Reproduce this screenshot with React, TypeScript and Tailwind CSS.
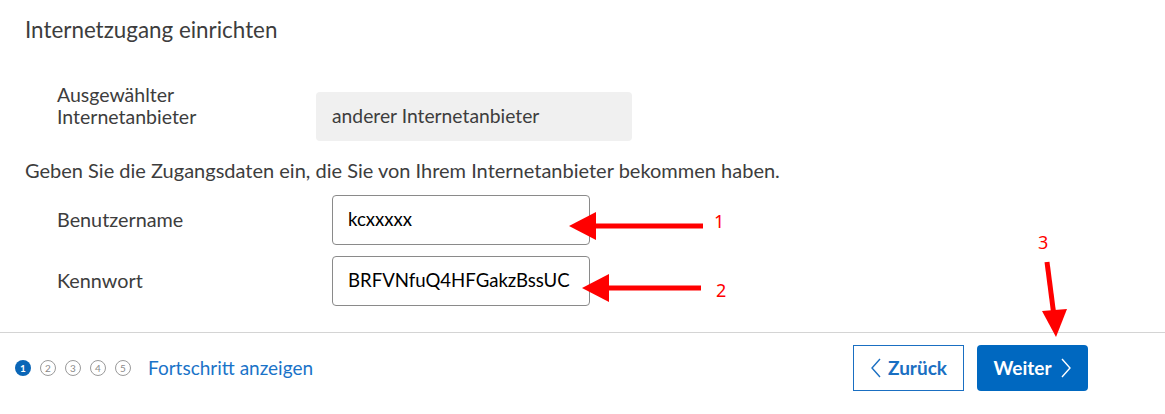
const steps = [1, 2, 3, 4, 5]

function Arrows() {
  return (
    <svg className="pointer-events-none absolute inset-0" width="1165" height="414" viewBox="0 0 1165 414">
      <g fill="#ff0000" stroke="#ff0000">
        <line x1="703" y1="226" x2="590" y2="226" strokeWidth="5" />
        <polygon points="569,226 596,212 596,240" stroke="none" />
        <line x1="701" y1="288" x2="602" y2="288" strokeWidth="5" />
        <polygon points="582,288 609,274 609,302" stroke="none" />
        <line x1="1047" y1="262" x2="1054" y2="316" strokeWidth="5" />
        <polygon points="1056,337 1042,311 1067,309" stroke="none" />
      </g>
      <g fill="#ff0000" fontFamily="'Noto Sans', sans-serif" fontSize="18">
        <text x="714" y="228">1</text>
        <text x="716" y="297">2</text>
        <text x="1038" y="249">3</text>
      </g>
    </svg>
  )
}

export default function App() {
  return (
    <div className="relative h-[414px] w-[1165px] overflow-hidden bg-white text-[#3d3d3d]" style={{ fontFamily: "Lato, 'Noto Sans', sans-serif" }}>
      <div className="px-[25px] pt-[15px]">
        <h1 className="text-[22.4px] leading-[30px]">Internetzugang einrichten</h1>

        <div className="mt-[39px] flex h-[57px] items-start pl-[32px]">
          <div className="w-[259px] text-[19.5px] leading-[22px]">
            Ausgewählter
            <br />
            Internetanbieter
          </div>
          <div className="mt-[8px] flex h-[49px] w-[316px] items-center rounded bg-[#f0f0f0] px-4 text-[19.3px]">
            anderer Internetanbieter
          </div>
        </div>

        <p className="mt-[17px] text-[20px] leading-[24px]">
          Geben Sie die Zugangsdaten ein, die Sie von Ihrem Internetanbieter bekommen haben.
        </p>

        <div className="mt-[13px] flex flex-col gap-[11px] pl-[32px]">
          <div className="flex items-center">
            <label className="w-[275px] text-[19.8px]">Benutzername</label>
            <div className="flex h-[50px] w-[258px] items-center rounded border border-[#8a8a8a] px-[15px] text-[18.6px] text-black">
              kcxxxxx
            </div>
          </div>
          <div className="flex items-center">
            <label className="w-[275px] text-[19.8px]">Kennwort</label>
            <div className="flex h-[50px] w-[258px] items-center rounded border border-[#8a8a8a] px-[15px] text-[18.6px] text-black">
              BRFVNfuQ4HFGakzBssUC
            </div>
          </div>
        </div>
      </div>

      <div className="mt-[26px] border-t border-[#d4d4d4]" />

      <div className="flex items-center justify-between pl-[15px] pr-[77px] pt-[12px]">
        <div className="flex items-center">
          <div className="flex items-center gap-[9px]">
            {steps.map((s) => (
              <span
                key={s}
                className={
                  s === 1
                    ? 'flex h-4 w-4 items-center justify-center rounded-full bg-[#0a66b7] text-[10px] font-bold text-white'
                    : 'flex h-4 w-4 items-center justify-center rounded-full border border-[#9a9a9a] text-[10px] text-[#8a8a8a]'
                }
              >
                {s}
              </span>
            ))}
          </div>
          <a className="ml-[17px] text-[19px] text-[#1a73c8]">Fortschritt anzeigen</a>
        </div>

        <div className="flex items-center gap-[13px]">
          <button className="flex h-[46px] w-[111px] items-center justify-center gap-[6px] border border-[#1a6fc2] text-[19px] font-bold text-[#1a6fc2]">
            <svg width="12" height="22" viewBox="0 0 12 22" fill="none" stroke="currentColor" strokeWidth="1.4">
              <path d="M10 2 L2 11 L10 20" />
            </svg>
            Zurück
          </button>
          <button className="flex h-[46px] w-[111px] items-center justify-center gap-2 rounded-sm bg-[#0068c0] text-[19px] font-bold text-white">
            Weiter
            <svg width="12" height="22" viewBox="0 0 12 22" fill="none" stroke="currentColor" strokeWidth="1.4">
              <path d="M2 2 L10 11 L2 20" />
            </svg>
          </button>
        </div>
      </div>

      <Arrows />
    </div>
  )
}
